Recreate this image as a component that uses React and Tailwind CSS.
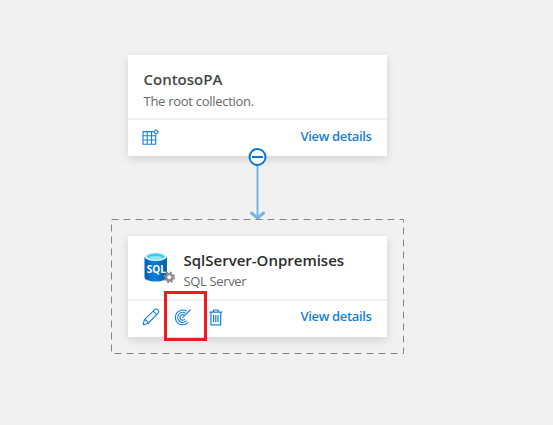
import React from "react";

function GridIcon() {
  return (
    <svg className="block" width="18" height="18" viewBox="0 0 18 18" fill="none" stroke="#1680d8" strokeWidth="1.1">
      <path d="M11.5 4.6H1v12.6h12.7V8M1 8.8h12.7M1 13h12.7M5.2 4.6v12.6M9.5 4.6v12.6" />
      <path d="M14 2.7l2.3 2.3L14 7.3 11.7 5z" fill="#fff" />
    </svg>
  );
}

function PencilIcon() {
  return (
    <svg className="block" width="18" height="18" viewBox="0 0 18 18" fill="none" stroke="#1680d8" strokeWidth="1.1" strokeLinejoin="round">
      <path d="M1.2 16.8l1.1-4.9L12.7 1.7a2.1 2.1 0 0 1 3 0l.4.4a2.1 2.1 0 0 1 0 3L5.9 15.5z" />
      <path d="M11.2 3.2l3.5 3.5M2.3 11.9c1.8.1 3.4 1.6 3.6 3.6" />
    </svg>
  );
}

function ScanIcon() {
  return (
    <svg className="block" width="18" height="18" viewBox="0 0 18 18" fill="none" stroke="#1680d8" strokeWidth="1.1" strokeLinecap="round">
      <path d="M8.7 9.4L16.2 2" />
      <path d="M12.4 2.99A7.4 7.4 0 1 0 13.93 14.63" />
      <path d="M11.2 5.07A5 5 0 1 0 12.24 12.94" />
      <path d="M10.05 7.06A2.7 2.7 0 1 0 10.61 11.31" />
    </svg>
  );
}

function TrashIcon() {
  return (
    <svg className="block" width="14" height="17" viewBox="0 0 14 17" fill="none" stroke="#1680d8" strokeWidth="1.2">
      <path d="M.4 3.2h12.8M4.4 3V1h4.8v2M1.9 3.2v12.6h9.8V3.2M4.6 6v7.3M6.8 6v7.3M9 6v7.3" />
    </svg>
  );
}

function SqlIcon() {
  return (
    <svg className="block" width="32" height="32" viewBox="0 0 32 32">
      <defs>
        <linearGradient id="cyl" x1="0" x2="1" y1="0" y2="0">
          <stop offset="0" stopColor="#0060b5" />
          <stop offset=".45" stopColor="#0b80dc" />
          <stop offset="1" stopColor="#005da9" />
        </linearGradient>
      </defs>
      <path d="M.5 4.8v20.4c0 2.4 5 4.3 11.2 4.3s11.2-1.9 11.2-4.3V4.8z" fill="url(#cyl)" />
      <ellipse cx="11.7" cy="4.8" rx="11.2" ry="4.2" fill="#e5eff5" />
      <ellipse cx="11.7" cy="4.5" rx="8.8" ry="2.9" fill="#32cfea" />
      <ellipse cx="11.7" cy="5.7" rx="6.6" ry="1.6" fill="#8be9f6" />
      <text x="2.8" y="20.6" fill="#fff" fontSize="11.2" fontWeight="700" textLength="19.2" lengthAdjust="spacingAndGlyphs" fontFamily="'Open Sans', sans-serif">
        SQL
      </text>
      <g transform="translate(25.3 25.3)">
        <circle r="3.2" fill="#fff" stroke="#8a8a8a" strokeWidth="2.3" />
        <circle r="4.9" fill="none" stroke="#8a8a8a" strokeWidth="1.7" strokeDasharray="2.1 1.75" />
      </g>
    </svg>
  );
}

function Card({ icon, title, subtitle, subtitleClass, titleClass, actions, linkClass }) {
  return (
    <section className="flex h-[101px] w-[259px] flex-col bg-white shadow-[0_3px_9px_rgba(0,0,0,0.13)]">
      <div className="flex h-[63px] shrink-0 items-start pl-[15.5px] pt-[14px]">
        {icon}
        <div className="whitespace-nowrap">
          <h2 className={titleClass}>{title}</h2>
          <p className={subtitleClass}>{subtitle}</p>
        </div>
      </div>
      <div className="flex grow items-center justify-between border-t-2 border-[#f1f1f1] pb-1 pl-[14px] pr-[15.5px]">
        <div className="flex items-center">{actions}</div>
        <a className={`whitespace-nowrap text-[13px] font-semibold leading-[18px] tracking-[-0.34px] text-[#1680d8] ${linkClass}`}>View details</a>
      </div>
    </section>
  );
}

export default function App() {
  return (
    <main className="h-[425px] w-[553px] overflow-hidden bg-[#f1f1f1] pl-[111px] pt-[55px] font-['Open_Sans',sans-serif]">
      <div className="flex w-[293px] flex-col items-center">
        <Card
          title="ContosoPA"
          titleClass="text-[15px] font-semibold leading-[20px] text-[#454545]"
          subtitle="The root collection."
          subtitleClass="mt-[2px] text-[13px] leading-[20px] tracking-[-0.28px] text-[#686868]"
          linkClass="mb-px"
          actions={<GridIcon />}
        />
        <svg className="relative -mt-[9px] block" width="21" height="73" viewBox="-0.5 0 21 73" fill="none">
          <path d="M10 18v53" stroke="#78b3e5" strokeWidth="2" />
          <path d="M4 66l6 5 6-5" stroke="#78b3e5" strokeWidth="3" strokeLinecap="round" strokeLinejoin="round" />
          <circle cx="10" cy="10" r="8" fill="#fff" stroke="#0878d4" strokeWidth="2" />
          <path d="M4.5 10h11" stroke="#0878d4" strokeWidth="2" />
        </svg>
        <div className="relative -mt-px flex h-[135px] w-[293px] justify-center pt-[17px]">
          <svg className="absolute inset-0 block" width="293" height="135" fill="none">
            <rect x=".5" y=".5" width="292" height="134" stroke="#858585" strokeDasharray="7 5" />
          </svg>
          <div className="relative">
            <Card
              icon={<div className="mr-[8px] mt-[2px]"><SqlIcon /></div>}
              title="SqlServer-Onpremises"
              titleClass="text-[15px] font-semibold leading-[20px] text-[#2c2c2c]"
              subtitle="SQL Server"
              subtitleClass="mt-[1px] text-[13px] leading-[20px] tracking-[-0.35px] text-[#686868]"
              linkClass="mb-[3px]"
              actions={
                <>
                  <PencilIcon />
                  <span className="ml-[14px]"><ScanIcon /></span>
                  <span className="ml-[17px]"><TrashIcon /></span>
                </>
              }
            />
            <div className="absolute left-[36px] top-[55px] h-[50px] w-[43px] border-[3px] border-[#ed1c24]" />
          </div>
        </div>
      </div>
    </main>
  );
}
